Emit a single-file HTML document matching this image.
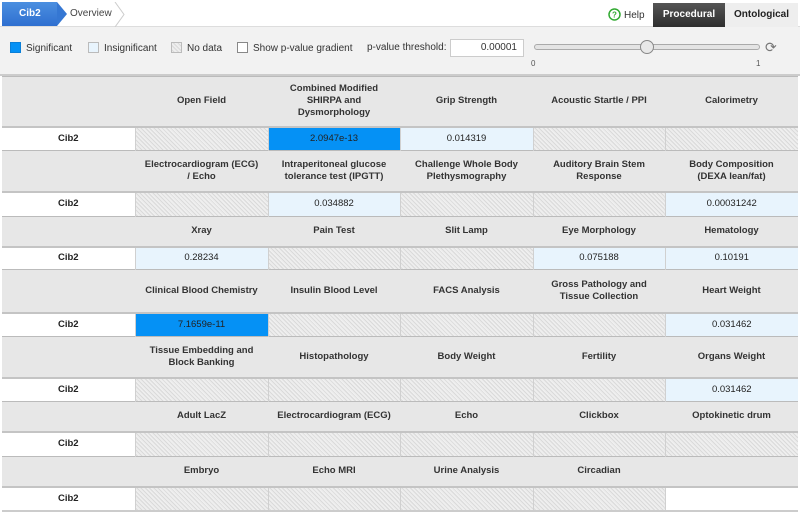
<!DOCTYPE html>
<html><head><meta charset="utf-8"><style>
*{margin:0;padding:0;box-sizing:border-box}
body{width:800px;height:512px;overflow:hidden;background:#fff;font-family:"Liberation Sans",Arial,sans-serif;color:#333;position:relative}
.top{position:absolute;left:0;top:0;width:800px;height:27px;background:#fff;border-bottom:1px solid #ddd}
.tab1{position:absolute;left:2px;top:2px;width:55px;height:24px;background:linear-gradient(#4b8fe0,#2f6fd0);color:#fff;font-weight:bold;font-size:10px;line-height:24px;padding-left:17px}
.tab1:after{content:"";position:absolute;right:-10px;top:0;border-left:10px solid #3577d3;border-top:12px solid transparent;border-bottom:12px solid transparent}
.ov{position:absolute;left:70px;top:2px;height:24px;line-height:24px;font-size:10px;color:#444}
.help{position:absolute;left:608px;top:8px;font-size:10px;color:#333;line-height:12px}
.proc{position:absolute;left:653px;top:3px;width:72px;height:24px;background:linear-gradient(#555,#2e2e2e);color:#fff;font-weight:bold;font-size:10px;text-align:center;line-height:23px}
.onto{position:absolute;left:725px;top:3px;width:73px;height:24px;background:#eee;color:#222;font-weight:bold;font-size:10px;text-align:center;line-height:23px}
.bar{position:absolute;left:0;top:27px;width:800px;height:49px;background:#f2f2f2;border-bottom:2px solid #ccc}
.lg{position:absolute;top:42px;font-size:10px;color:#333}
.sw{display:inline-block;width:11px;height:11px;vertical-align:-2px;margin-right:5px}
.inp{position:absolute;left:450px;top:39px;width:74px;height:18px;background:#fff;border:1px solid #ccc;font-size:10px;text-align:right;padding-right:6px;line-height:16px}
.slider{position:absolute;left:534px;top:44px;width:226px;height:6px;border:1px solid #aaa;border-radius:4px;background:#e4e4e4}
.knob{position:absolute;left:640px;top:40px;width:14px;height:14px;border:1.5px solid #888;border-radius:50%;background:#e8e8e8}
.tk{position:absolute;top:59px;font-size:8px;color:#555}
table{position:absolute;left:2px;top:76px;border-collapse:collapse;width:796px;table-layout:fixed}
td{font-size:9.5px;text-align:center;font-weight:bold;padding:0 9px;line-height:12px}
tr.h td{background:#e7e7e7}
tr.h{border-top:1px solid #bbb}
tr.d{border-top:2px solid #c4c4c4}
tr.d td{border-left:1px solid #d0d0d0;font-weight:normal;color:#222}
tr.d td:first-child{background:#fff;font-weight:bold;border-left:none}
.n{background:repeating-linear-gradient(45deg,#ececec 0 1px,#dadada 1px 2px,#f0f0f0 2px 3px)}
.s{background:#0591f5}
.i{background:#e8f4fd}
.w{background:#fff}
</style></head><body>
<div class="top"><div class="tab1">Cib2</div><div class="ov">Overview</div>
<svg style="position:absolute;left:114px;top:2px" width="12" height="25"><path d="M1 0 L10 12.5 L1 25" fill="none" stroke="#ccc" stroke-width="1"/></svg>
<div class="help"><svg width="13" height="13" style="vertical-align:-3px;margin-right:3px"><circle cx="6.5" cy="6.5" r="5.5" fill="none" stroke="#3a3" stroke-width="1.5"/><text x="6.5" y="9.5" font-size="8" font-weight="bold" text-anchor="middle" fill="#3a3" font-family="Liberation Sans">?</text></svg>Help</div>
<div class="proc">Procedural</div><div class="onto">Ontological</div></div>
<div class="bar"></div>
<div class="lg" style="left:10px"><span class="sw" style="background:#0591f5;border:1px solid #0a7fd8"></span>Significant</div>
<div class="lg" style="left:88px"><span class="sw" style="background:#e8f4fd;border:1px solid #bbb"></span>Insignificant</div>
<div class="lg" style="left:171px"><span class="sw n" style="border:1px solid #bbb"></span>No data</div>
<div class="lg" style="left:237px"><span class="sw" style="background:#fff;border:1px solid #888"></span>Show p-value gradient</div>
<div class="lg" style="left:367px">p-value threshold:</div>
<div class="inp">0.00001</div>
<div class="slider"></div><div class="knob"></div>
<div style="position:absolute;left:765px;top:40px;font-size:14px;color:#777;line-height:14px">&#x27F3;</div>
<div class="tk" style="left:531px">0</div><div class="tk" style="left:756px">1</div>
<table>
<colgroup><col style="width:133px"><col style="width:133px"><col style="width:132px"><col style="width:133px"><col style="width:132px"><col style="width:133px"></colgroup>
<tr class="h" style="height:50px"><td></td><td>Open Field</td><td>Combined Modified SHIRPA and Dysmorphology</td><td>Grip Strength</td><td>Acoustic Startle / PPI</td><td>Calorimetry</td></tr>
<tr class="d" style="height:24px"><td>Cib2</td><td class="n"></td><td class="s">2.0947e-13</td><td class="i">0.014319</td><td class="n"></td><td class="n"></td></tr>
<tr class="h" style="height:41px"><td></td><td>Electrocardiogram (ECG) / Echo</td><td>Intraperitoneal glucose tolerance test (IPGTT)</td><td>Challenge Whole Body Plethysmography</td><td>Auditory Brain Stem Response</td><td>Body Composition (DEXA lean/fat)</td></tr>
<tr class="d" style="height:25px"><td>Cib2</td><td class="n"></td><td class="i">0.034882</td><td class="n"></td><td class="n"></td><td class="i">0.00031242</td></tr>
<tr class="h" style="height:30px"><td></td><td>Xray</td><td>Pain Test</td><td>Slit Lamp</td><td>Eye Morphology</td><td>Hematology</td></tr>
<tr class="d" style="height:23px"><td>Cib2</td><td class="i">0.28234</td><td class="n"></td><td class="n"></td><td class="i">0.075188</td><td class="i">0.10191</td></tr>
<tr class="h" style="height:43px"><td></td><td>Clinical Blood Chemistry</td><td>Insulin Blood Level</td><td>FACS Analysis</td><td>Gross Pathology and Tissue Collection</td><td>Heart Weight</td></tr>
<tr class="d" style="height:24px"><td>Cib2</td><td class="s">7.1659e-11</td><td class="n"></td><td class="n"></td><td class="n"></td><td class="i">0.031462</td></tr>
<tr class="h" style="height:41px"><td></td><td>Tissue Embedding and Block Banking</td><td>Histopathology</td><td>Body Weight</td><td>Fertility</td><td>Organs Weight</td></tr>
<tr class="d" style="height:24px"><td>Cib2</td><td class="n"></td><td class="n"></td><td class="n"></td><td class="n"></td><td class="i">0.031462</td></tr>
<tr class="h" style="height:30px"><td></td><td>Adult LacZ</td><td>Electrocardiogram (ECG)</td><td>Echo</td><td>Clickbox</td><td>Optokinetic drum</td></tr>
<tr class="d" style="height:25px"><td>Cib2</td><td class="n"></td><td class="n"></td><td class="n"></td><td class="n"></td><td class="n"></td></tr>
<tr class="h" style="height:30px"><td></td><td>Embryo</td><td>Echo MRI</td><td>Urine Analysis</td><td>Circadian</td><td></td></tr>
<tr class="d" style="height:24px;border-bottom:2px solid #ccc"><td>Cib2</td><td class="n"></td><td class="n"></td><td class="n"></td><td class="n"></td><td class="w"></td></tr>
</table>
</body></html>
